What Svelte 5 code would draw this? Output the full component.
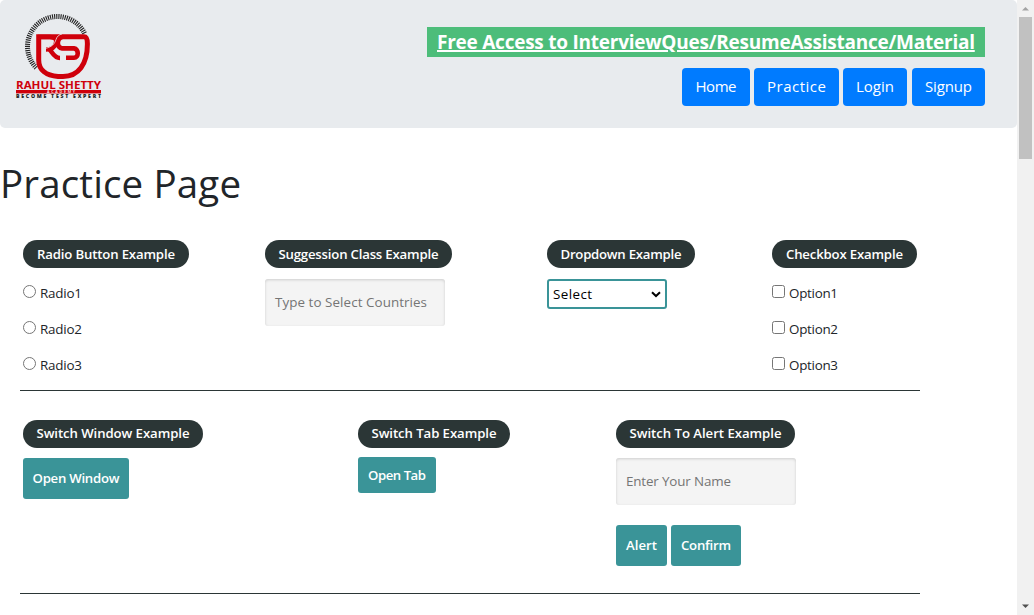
<script>
  const nav = [
    { label: 'Home', width: 68, text: 41 },
    { label: 'Practice', width: 85, text: 59 },
    { label: 'Login', width: 64, text: 38 },
    { label: 'Signup', width: 73, text: 47 }
  ];

  // Spreads the letters of a label over the given width in pixels.
  function fit(node, width) {
    const range = document.createRange();
    range.selectNodeContents(node);
    const natural = range.getBoundingClientRect().width;
    const count = node.textContent.length;
    node.style.letterSpacing = `${(width - natural) / (count - 1)}px`;
    node.style.marginRight = `${-(width - natural) / (count - 1)}px`;
  }
</script>

<div class="window">
  <div class="page">
    <header>
      <svg class="logo" width="90" height="90" viewBox="14 12 90 90">
        <path d="M36.3 67.7 A30 30 0 1 1 84.7 33.8" fill="none" stroke="#222" stroke-width="5" stroke-dasharray="1.1 1" />
        <path d="M38.7 36.8 H84 Q87.4 36.8 87.4 44 C87.4 64 78.5 76.4 63 76.4 H58 C46 75.6 38.7 70 38.7 60 Z" fill="#e8ebee" stroke="#cf000b" stroke-width="5" />
        <g fill="none" stroke="#cf000b" stroke-width="4.6">
          <path d="M38 37 H50 C55 37.4 57 39 56 43 C55 47 52 49.5 46 49.5" />
          <path d="M49 49 C52 51 53.5 58 60 58" />
          <path d="M62 37 C56 39 57 48.2 62 48.4 H74 C79 49 79 57.8 74 57.8 H66" />
        </g>
        <path d="M45 48.5 C52 47 54.5 44 56 39.5 C57 36.5 59 34.5 62 34" fill="none" stroke="#e8ebee" stroke-width="0.8" />
        <text x="16" y="89" textLength="85" lengthAdjust="spacingAndGlyphs" font-size="10.8" font-weight="700" fill="#cf000b">RAHUL SHETTY</text>
        <rect x="16" y="90" width="85" height="3.4" fill="#cf000b" />
        <text x="47" y="93.1" textLength="28" lengthAdjust="spacing" font-size="3.7" font-weight="600" fill="#fff">ACADEMY</text>
        <text x="16" y="98" textLength="85" lengthAdjust="spacing" font-size="5.2" font-weight="800" fill="#222">BECOME TEST EXPERT</text>
      </svg>
      <div class="right">
        <a class="banner" href="#free"><span use:fit={538}>Free Access to InterviewQues/ResumeAssistance/Material</span></a>
        <nav>
          {#each nav as n}
            <button class="primary" class:last={n.label === 'Signup'} style="width:{n.width}px"><span use:fit={n.text}>{n.label}</span></button>
          {/each}
        </nav>
      </div>
    </header>

    <h1><span use:fit={241}>Practice Page</span></h1>

    <section class="row first">
      <fieldset>
        <h2 style="width:166px"><span use:fit={138}>Radio Button Example</span></h2>
        {#each [1, 2, 3] as i}
          <label><input type="radio" name="radio" /><span use:fit={42}>Radio{i}</span></label>
        {/each}
      </fieldset>
      <fieldset>
        <h2 style="width:187px"><span use:fit={160}>Suggession Class Example</span></h2>
        <div class="field countries"><span use:fit={152}>Type to Select Countries</span></div>
      </fieldset>
      <fieldset>
        <h2 style="width:148px"><span use:fit={121}>Dropdown Example</span></h2>
        <div class="select">
          <span use:fit={39}>Select</span>
          <svg width="10" height="7" viewBox="0 0 10 7"><path d="M1 1.2 L5 5 L9 1.2" fill="none" stroke="#000" stroke-width="2" /></svg>
        </div>
      </fieldset>
      <fieldset>
        <h2 style="width:145px"><span use:fit={117}>Checkbox Example</span></h2>
        {#each [1, 2, 3] as i}
          <label><input type="checkbox" /><span use:fit={49}>Option{i}</span></label>
        {/each}
      </fieldset>
    </section>

    <section class="row second">
      <fieldset>
        <h2 style="width:180px"><span use:fit={153}>Switch Window Example</span></h2>
        <button class="teal" style="width:106px"><span use:fit={87}>Open Window</span></button>
      </fieldset>
      <fieldset>
        <h2 style="width:152px"><span use:fit={125}>Switch Tab Example</span></h2>
        <button class="teal tab" style="width:78px"><span use:fit={58}>Open Tab</span></button>
      </fieldset>
      <fieldset>
        <h2 style="width:179px"><span use:fit={152}>Switch To Alert Example</span></h2>
        <div class="field name"><span use:fit={105}>Enter Your Name</span></div>
        <div class="actions">
          <button class="teal" style="width:51px"><span use:fit={31}>Alert</span></button>
          <button class="teal" style="width:70px"><span use:fit={50}>Confirm</span></button>
        </div>
      </fieldset>
    </section>
  </div>

  <aside class="scrollbar">
    <svg width="17" height="17"><path d="M5 10.5 H12 L8.5 7 Z" fill="#a3a3a3" /></svg>
    <div class="thumb"></div>
    <svg class="down" width="17" height="17"><path d="M5 6.5 H12 L8.5 10 Z" fill="#505050" /></svg>
  </aside>
</div>

<style>
  :global(body) { margin: 0; overflow: hidden; }
  .window {
    display: flex;
    width: 1034px;
    height: 615px;
    overflow: hidden;
    background: #fff;
    color: #212529;
    font-family: "Open Sans", "Noto Sans", sans-serif;
    font-size: 14px;
  }
  .window * { box-sizing: border-box; }
  span { white-space: nowrap; display: inline-block; }
  .page { width: 1017px; flex: none; }
  header {
    display: flex;
    justify-content: space-between;
    height: 128px;
    padding: 12px 32px 0 14px;
    background: #e8ebee;
    border-radius: 5px;
  }
  .right { padding-top: 15px; }
  .banner {
    display: flex;
    width: 558px;
    height: 30px;
    padding: 0 10px;
    background: #4dbd7a;
    color: #fff;
    font-size: 19px;
    font-weight: 700;
    line-height: 31px;
    text-decoration: none;
  }
  .banner span { text-decoration: underline; text-decoration-thickness: 2px; text-underline-offset: 1px; }
  nav { display: flex; justify-content: flex-end; gap: 4px; margin-top: 11px; }
  button {
    display: flex;
    align-items: center;
    justify-content: center;
    padding: 0;
    border: 0;
    border-radius: 4px;
    color: #fff;
    font-family: inherit;
  }
  .primary { height: 38px; padding-bottom: 2px; background: #007bff; font-size: 15px; }
  .last { margin-left: 1px; }
  h1 { margin: 31px 0 0; height: 48px; line-height: 48px; font-size: 38.5px; font-weight: 400; }
  .row { display: grid; margin-left: 20px; width: 900px; padding-left: 3px; border-bottom: 1px solid #2b3636; }
  .first { grid-template-columns: 242px 282px 225px 1fr; margin-top: 33px; height: 151px; }
  .second { grid-template-columns: 335px 258px 1fr; padding-top: 29px; height: 203px; }
  fieldset { margin: 0; padding: 0; border: 0; min-width: 0; }
  h2 {
    display: flex;
    justify-content: center;
    margin: 0;
    height: 28px;
    border-radius: 14px;
    background: #2b3636;
    color: #fff;
    font-size: 13.2px;
    font-weight: 600;
    line-height: 28px;
  }
  .second h2 { line-height: 26px; }
  label { display: flex; height: 20px; margin-bottom: 16px; line-height: 20px; font-size: 13.4px; }
  h2 + label { margin-top: 15px; }
  input { appearance: none; flex: none; width: 13px; height: 13px; margin: 2px 4px 0 0; border: 1px solid #767676; background: #fff; }
  input[type='radio'] { border-radius: 50%; }
  input[type='checkbox'] { border-radius: 2.5px; }
  .field {
    display: flex;
    align-items: center;
    width: 180px;
    height: 47px;
    padding: 0 0 2px 10px;
    background: #f4f4f4;
    border-radius: 3px;
    color: #757575;
    font-size: 13.4px;
    box-shadow: inset 0 1px 3px rgba(0, 0, 0, 0.16);
  }
  .countries { margin-top: 11px; }
  .name { margin-top: 10px; }
  .select {
    display: flex;
    align-items: center;
    justify-content: space-between;
    width: 120px;
    height: 30px;
    margin-top: 11px;
    padding: 0 4px;
    border: 2px solid #3a9498;
    border-radius: 3px;
    color: #000;
    font-size: 13.4px;
  }
  .select span { padding-bottom: 1px; }
  .teal { height: 41px; margin-top: 10px; padding-bottom: 2px; background: #3a9498; border-radius: 3px; font-size: 13.2px; font-weight: 600; }
  .tab { height: 36px; margin-top: 9px; padding-bottom: 0; }
  .actions { display: flex; gap: 4px; margin-top: 10px; padding-top: 10px; }
  .actions .teal { margin-top: 0; }
  .scrollbar { display: flex; flex-direction: column; width: 17px; height: 615px; background: #f1f1f1; }
  .thumb { width: 13px; height: 142px; margin-left: 2px; background: #c1c1c1; }
  .scrollbar svg { flex: none; }
  .down { margin-top: auto; }
</style>
